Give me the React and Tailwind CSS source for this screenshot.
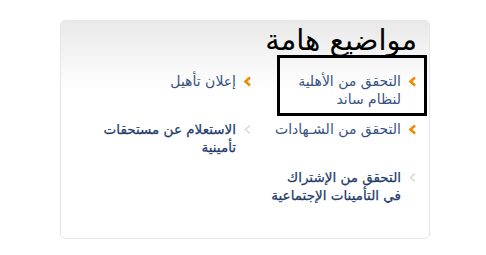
function Chevron({ active }) {
  return (
    <svg width="9" height="11" viewBox="0 0 9 11" className="mt-[4px] shrink-0">
      <polyline
        points="7,1.5 2.5,5.5 7,9.5"
        fill="none"
        stroke={active ? "#f08a00" : "#d8d8d8"}
        strokeWidth={active ? "2.6" : "1.5"}
      />
    </svg>
  );
}

function Item({ active, bold, lines }) {
  return (
    <div className="flex items-start gap-[7px]">
      <Chevron active={active} />
      <div
        className={`whitespace-nowrap leading-[18px] ${bold ? "text-[13.5px] text-[#233c6a] [-webkit-text-stroke:0.25px_#233c6a]" : "text-[14px] text-[#38537f]"}`}
      >
        {lines.map((l, i) => (
          <div key={i}>{l}</div>
        ))}
      </div>
    </div>
  );
}

export default function App() {
  return (
    <div className="w-[486px] h-[255px] bg-white pt-[20px] pl-[60px]" style={{ fontFamily: '"DejaVu Sans", sans-serif' }}>
      <div
        dir="rtl"
        className="relative w-[370px] h-[219px] rounded-[5px] border border-[#e6e6e6] bg-[linear-gradient(to_bottom,#e9e9e9,#ffffff_32%)] pr-[12px]"
      >
        <h2 className="pt-[4px] text-[29px] leading-[30px] text-black font-normal">
          مواضيع هامة
        </h2>
        <div className="grid grid-cols-[165px_165px] gap-y-[12px] mt-[17px]">
          <Item active lines={["التحقق من الأهلية", "لنظام ساند"]} />
          <Item active lines={["إعلان تأهيل"]} />
          <Item active lines={["التحقق من الشـهادات"]} />
          <Item bold lines={["الاستعلام عن مستحقات", "تأمينية"]} />
          <Item bold lines={["التحقق من الإشتراك", "في التأمينات الإجتماعية"]} />
        </div>
        <div className="absolute right-[2px] top-[34px] w-[150px] h-[61px] border-[3px] border-black pointer-events-none" />
      </div>
    </div>
  );
}
